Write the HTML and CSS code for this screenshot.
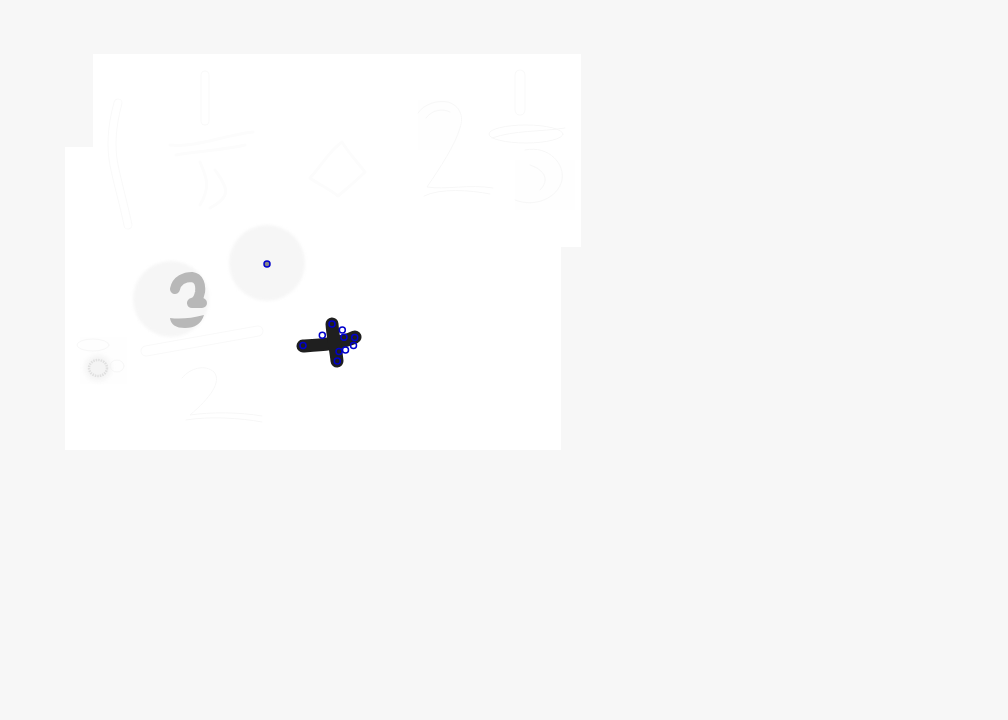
FILE: index.html
```html
<!DOCTYPE html>
<html lang="en">
<head>
<meta charset="utf-8">
<title>Sketch canvas</title>
<link rel="stylesheet" href="styles.css">
</head>
<body>
<svg class="canvas" width="1008" height="720" viewBox="0 0 1008 720" xmlns="http://www.w3.org/2000/svg">
  <rect class="sheet" x="93" y="54" width="488" height="193"/>
  <rect class="sheet" x="65" y="147" width="496" height="303"/>

  <g class="faint">
    <rect class="patch" x="80" y="337" width="47" height="47"/>
    <rect class="patch" x="418" y="100" width="42" height="50"/>
    <rect class="patch" x="515" y="160" width="60" height="50"/>
    <path class="halo" d="M118 103C112 125 110 145 114 165C118 185 124 205 128 225"/>
    <path class="core" d="M118 103C112 125 110 145 114 165C118 185 124 205 128 225"/>
    <path class="halo" d="M205 75V121"/>
    <path class="core" d="M205 75V121"/>
    <path class="wash" d="M170 145C195 148 225 135 253 132"/>
    <path class="wash" d="M176 155C190 152 225 150 245 145"/>
    <path class="wash" d="M200 162C205 175 212 185 200 205"/>
    <path class="wash" d="M215 170C225 185 235 195 210 208"/>
    <path class="wash" d="M310 178C322 165 330 150 342 142C350 155 360 165 365 172C355 182 345 190 338 196C328 188 318 184 310 178Z"/>
    <path class="line" d="M418 113C424 104 437 100 448 102C460 106 464 116 460 128C455 145 440 168 427 187C445 190 470 184 493 188"/>
    <path class="line" d="M426 118C432 110 442 108 450 112"/>
    <path class="line" d="M424 196C440 188 470 190 490 194"/>
    <path class="halo wide" d="M520 75V110"/>
    <path class="core wide" d="M520 75V110"/>
    <ellipse class="line" cx="526" cy="134" rx="37" ry="9"/>
    <path class="line" d="M492 138C515 130 540 132 565 128"/>
    <path class="line" d="M525 150C550 145 565 165 562 180C558 198 535 208 515 200"/>
    <path class="line" d="M530 165C545 170 550 180 540 190"/>
    <path class="halo wide" d="M146 351L258 331"/>
    <path class="core wide" d="M146 351L258 331"/>
    <path class="line" d="M182 378C190 368 205 364 214 372C222 382 210 398 190 415C210 412 240 412 262 416"/>
    <path class="line" d="M186 420C210 416 240 418 262 422"/>
    <ellipse class="line" cx="93" cy="345" rx="16" ry="6"/>
    <ellipse class="line" cx="117" cy="366" rx="7" ry="6"/>
  </g>

  <circle class="disc" cx="267" cy="263" r="38"/>
  <circle class="disc" cx="171" cy="299" r="38"/>

  <circle class="smudge" cx="98" cy="368" r="13"/>
  <ellipse class="ring" cx="98" cy="368" rx="9" ry="8"/>

  <g class="soft">
    <path class="numeral" d="M175 289C177 280 185 277 192 277C199 278 201 285 200 292C199 298 197 302 192 303H202"/>
    <path class="numeral-fill" d="M170 318Q185 320 204 315Q200 328 185 328Q171 328 170 318Z"/>
    <path class="ink" d="M303 346C320 345 340 344 355 337"/>
    <path class="ink" d="M332 324C333 338 336 350 337 361"/>
    <circle class="dab" cx="267" cy="264" r="3"/>
  </g>

  <g>
    <circle class="handle" cx="267" cy="264" r="3"/>
    <circle class="handle" cx="303" cy="345.5" r="3"/>
    <circle class="handle" cx="332" cy="324" r="3"/>
    <circle class="handle" cx="322.3" cy="335.3" r="3"/>
    <circle class="handle" cx="342.3" cy="330" r="3"/>
    <circle class="handle" cx="344" cy="337.3" r="3"/>
    <circle class="handle" cx="354.7" cy="337.5" r="3"/>
    <circle class="handle" cx="353.5" cy="345.6" r="3"/>
    <circle class="handle" cx="345.5" cy="350" r="3"/>
    <circle class="handle" cx="339" cy="351.5" r="3"/>
    <circle class="handle" cx="337.3" cy="361" r="3"/>
  </g>
</svg>
</body>
</html>
```
FILE: styles.css
```css
html, body {
  margin: 0;
  padding: 0;
  background: #f7f7f7;
}

.canvas {
  display: block;
}

.sheet {
  fill: #ffffff;
}

.faint {
  filter: blur(0.7px);
}

.patch {
  fill: #fefefe;
}

.halo, .core, .wash, .line, .ring, .numeral, .ink {
  fill: none;
  stroke-linecap: round;
  stroke-linejoin: round;
}

.halo {
  stroke: #f9f9f9;
  stroke-width: 9px;
}

.core {
  stroke: #ffffff;
  stroke-width: 7px;
}

.halo.wide {
  stroke-width: 11px;
}

.core.wide {
  stroke-width: 9px;
}

.wash {
  stroke: #fcfcfc;
  stroke-width: 3px;
}

.line {
  stroke: #f7f7f7;
  stroke-width: 1px;
}

.disc {
  fill: #f6f6f6;
  filter: blur(1.5px);
}

.smudge {
  fill: #f4f4f4;
  filter: blur(2px);
}

.ring {
  stroke: #e0e0e0;
  stroke-width: 2.5px;
  stroke-dasharray: 1.5 1;
  stroke-linecap: butt;
  filter: blur(0.6px);
}

.soft {
  filter: blur(0.7px);
}

.numeral {
  stroke: #b8b8b8;
  stroke-width: 10px;
}

.numeral-fill {
  fill: #b8b8b8;
}

.ink {
  stroke: #1f1f1f;
  stroke-width: 13px;
}

.dab {
  fill: #888888;
}

.handle {
  fill: none;
  stroke: #0000cc;
  stroke-width: 1.5px;
}
```
